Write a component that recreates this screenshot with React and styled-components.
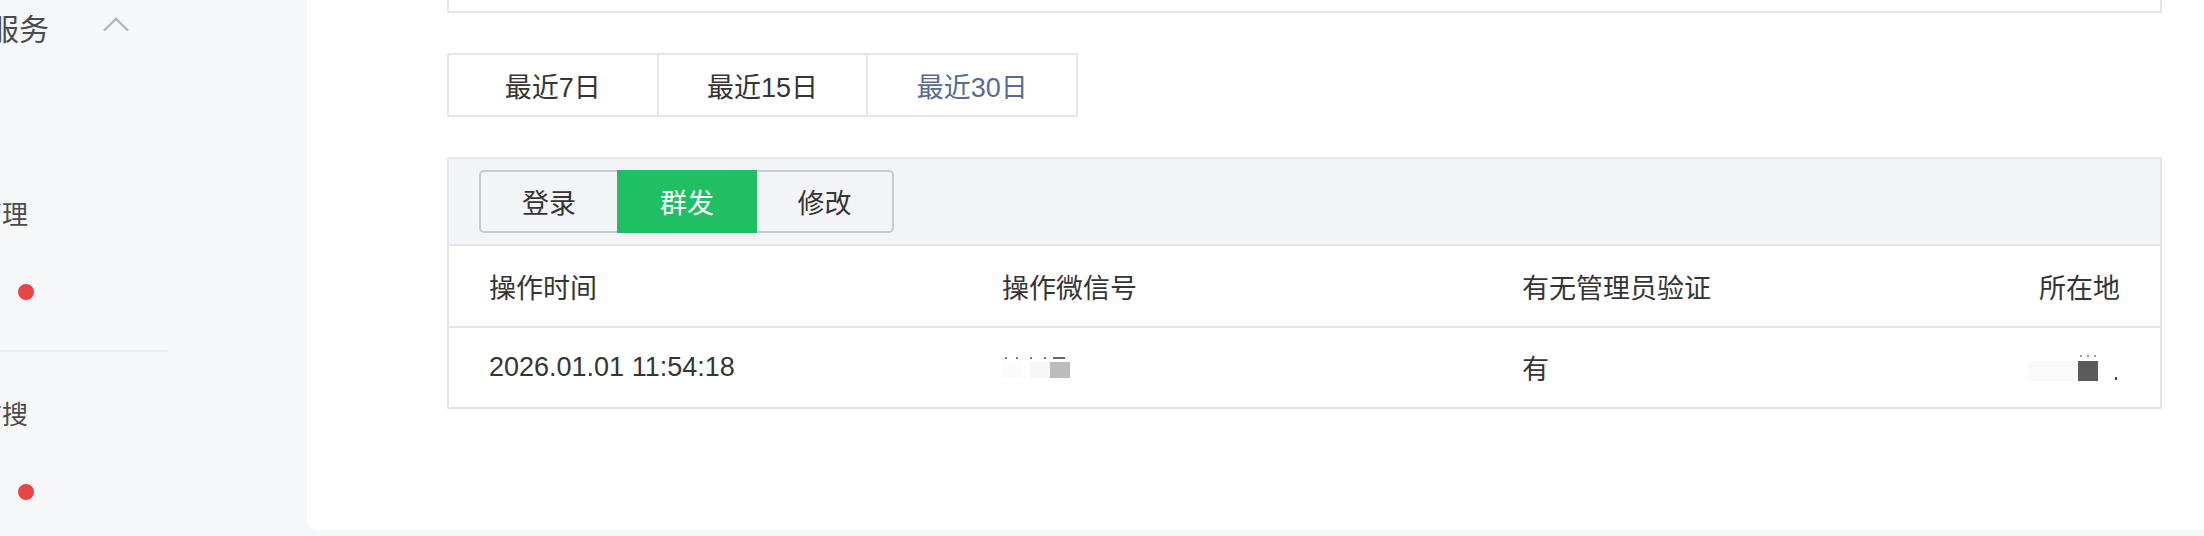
import styled, { createGlobalStyle } from 'styled-components';

const GlobalStyle = createGlobalStyle`
  html, body {
    margin: 0;
    padding: 0;
    background: #f6f7f9;
  }
  body {
    font-family: "Liberation Sans", "Noto Sans CJK SC", sans-serif;
    color: #353535;
  }
`;

const Page = styled.div`
  display: flex;
  width: 2204px;
  height: 536px;
  overflow: hidden;
`;

const Sidebar = styled.aside`
  width: 307px;
  flex-shrink: 0;
  display: flex;
  flex-direction: column;
  overflow: hidden;
  background: #f6f7f9;
`;

const NavRow = styled.div`
  display: flex;
  align-items: center;
  height: ${(p) => p.$height || 80}px;
  margin-bottom: ${(p) => p.$after || 0}px;
  flex-shrink: 0;
`;

const NavLabel = styled.span`
  margin-left: ${(p) => p.$shift}px;
  font-size: ${(p) => p.$size || 26}px;
  color: #4c4c4c;
  white-space: nowrap;
`;

const Chevron = styled.svg`
  margin-left: 54px;
  margin-top: -6px;
`;

const RedDot = styled.span`
  width: 16px;
  height: 16px;
  border-radius: 50%;
  background: #e84545;
  margin-left: ${(p) => p.$left || 18}px;
`;

const NavDivider = styled.div`
  width: 168px;
  height: 2px;
  background: #eaecef;
  margin: 18px 0 20px;
  flex-shrink: 0;
`;

const Main = styled.main`
  flex: 1;
  height: 530px;
  background: #ffffff;
  border-bottom-left-radius: 10px;
  padding: 0 42px 0 140px;
  box-sizing: border-box;
`;

const TopBox = styled.div`
  height: 11px;
  border: 2px solid #e5e6eb;
  border-top: none;
`;

const RangeTabs = styled.div`
  display: flex;
  width: 631px;
  height: 64px;
  margin-top: 40px;
  border: 2px solid #e5e6eb;
  box-sizing: border-box;
`;

const RangeTab = styled.div`
  flex: 1;
  display: flex;
  align-items: center;
  justify-content: center;
  font-size: 27px;
  color: ${(p) => (p.$active ? '#576b95' : '#353535')};
  & + & {
    border-left: 2px solid #e5e6eb;
  }
`;

const LogTable = styled.section`
  margin-top: 40px;
  border: 2px solid #e5e6eb;
`;

const Toolbar = styled.div`
  background: #f3f4f8;
  padding: 11px 30px;
  border-bottom: 2px solid #e5e6eb;
  display: flex;
`;

const Segmented = styled.div`
  display: flex;
  height: 63px;
`;

const SegButton = styled.div`
  display: flex;
  align-items: center;
  justify-content: center;
  width: ${(p) => p.$width}px;
  box-sizing: border-box;
  font-size: 27px;
  border: 2px solid #c9cacd;
  border-left-width: 0;
  border-right-width: 0;
  background: #f3f4f8;
  color: #353535;
  &:first-child {
    border-left-width: 2px;
    border-radius: 5px 0 0 5px;
  }
  &:last-child {
    border-right-width: 2px;
    border-radius: 0 5px 5px 0;
  }
  ${(p) =>
    p.$active &&
    `
    background: #21bf63;
    border-color: #21bf63;
    color: #ffffff;
  `}
`;

const Row = styled.div`
  display: grid;
  grid-template-columns: 513px 520px 1fr auto;
  align-items: center;
  height: ${(p) => p.$height}px;
  padding: 0 40px;
  font-size: 27px;
  color: #353535;
  border-bottom: ${(p) => (p.$divider ? '2px solid #e5e6eb' : 'none')};
`;

const EndCell = styled.div`
  justify-self: end;
  display: flex;
`;

const Redacted = styled.svg`
  display: block;
`;

function WechatBlur() {
  return (
    <Redacted width="75" height="30" viewBox="0 0 75 30">
      <rect x="3" y="4" width="2" height="2" fill="#777" />
      <rect x="14" y="4" width="2" height="2" fill="#777" />
      <rect x="28" y="4" width="2" height="2" fill="#777" />
      <rect x="42" y="4" width="2" height="2" fill="#777" />
      <rect x="51" y="4" width="12" height="2" fill="#666" />
      <rect x="0" y="9" width="20" height="16" fill="#fbfbfb" />
      <rect x="28" y="9" width="20" height="16" fill="#f6f6f6" />
      <rect x="48" y="9" width="20" height="16" fill="#bcbcbc" />
    </Redacted>
  );
}

function LocationBlur() {
  return (
    <Redacted width="92" height="32" viewBox="0 0 92 32">
      <rect x="0" y="9" width="50" height="20" fill="#fafafa" />
      <rect x="52" y="3" width="2" height="2" fill="#999" />
      <rect x="59" y="3" width="2" height="2" fill="#999" />
      <rect x="66" y="3" width="2" height="2" fill="#999" />
      <rect x="50" y="9" width="20" height="20" fill="#5b5b5b" />
      <rect x="87" y="25" width="2" height="3" fill="#444" />
    </Redacted>
  );
}

export default function App() {
  return (
    <>
      <GlobalStyle />
      <Page>
        <Sidebar>
          <NavRow $height={54} $after={118}>
            <NavLabel $shift={-71} $size={30}>增值服务</NavLabel>
            <Chevron width="26" height="15" viewBox="0 0 26 15">
              <polyline points="1,13.5 13,2 25,13.5" fill="none" stroke="#b5b5b5" strokeWidth="2.4" />
            </Chevron>
          </NavRow>
          <NavRow>
            <NavLabel $shift={-50}>群管理</NavLabel>
          </NavRow>
          <NavRow>
            <RedDot $left={18} />
          </NavRow>
          <NavDivider />
          <NavRow>
            <NavLabel $shift={-50}>微信搜</NavLabel>
          </NavRow>
          <NavRow>
            <RedDot $left={18} />
          </NavRow>
        </Sidebar>
        <Main>
          <TopBox />
          <RangeTabs>
            <RangeTab>最近7日</RangeTab>
            <RangeTab>最近15日</RangeTab>
            <RangeTab $active>最近30日</RangeTab>
          </RangeTabs>
          <LogTable>
            <Toolbar>
              <Segmented>
                <SegButton $width={138}>登录</SegButton>
                <SegButton $width={140} $active>群发</SegButton>
                <SegButton $width={137}>修改</SegButton>
              </Segmented>
            </Toolbar>
            <Row $height={80} $divider>
              <div>操作时间</div>
              <div>操作微信号</div>
              <div>有无管理员验证</div>
              <EndCell>所在地</EndCell>
            </Row>
            <Row $height={79}>
              <div>2026.01.01 11:54:18</div>
              <div><WechatBlur /></div>
              <div>有</div>
              <EndCell><LocationBlur /></EndCell>
            </Row>
          </LogTable>
        </Main>
      </Page>
    </>
  );
}
